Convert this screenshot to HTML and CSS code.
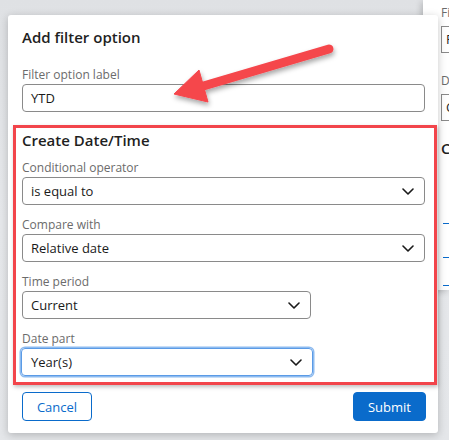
FILE: index.html
```html
<!DOCTYPE html>
<html lang="en">
<head>
<meta charset="utf-8">
<title>Add filter option</title>
<link rel="stylesheet" href="styles.css">
</head>
<body>
<div class="desk">
  <aside class="back-panel">
    <div class="bp-label">Fil</div>
    <div class="bp-input">F</div>
    <div class="bp-label bp-label2">Di</div>
    <div class="bp-input">C</div>
    <div class="bp-heading">C</div>
    <div class="bp-line bp-line1"></div>
    <div class="bp-line bp-line2"></div>
    <div class="bp-line bp-line3"></div>
  </aside>

  <section class="dialog">
    <h2 class="dialog-title">Add filter option</h2>

    <div class="field field-top">
      <label class="field-label">Filter option label</label>
      <div class="input">YTD</div>
    </div>

    <div class="annot">
      <h3 class="section-title">Create Date/Time</h3>

      <div class="field">
        <label class="field-label">Conditional operator</label>
        <div class="input select">
          <span>is equal to</span>
          <svg class="chev" viewBox="0 0 12 7" width="12" height="7"><polyline points="1,1 6,6 11,1"/></svg>
        </div>
      </div>

      <div class="field">
        <label class="field-label">Compare with</label>
        <div class="input select">
          <span>Relative date</span>
          <svg class="chev" viewBox="0 0 12 7" width="12" height="7"><polyline points="1,1 6,6 11,1"/></svg>
        </div>
      </div>

      <div class="field">
        <label class="field-label">Time period</label>
        <div class="input select narrow">
          <span>Current</span>
          <svg class="chev" viewBox="0 0 12 7" width="12" height="7"><polyline points="1,1 6,6 11,1"/></svg>
        </div>
      </div>

      <div class="field">
        <label class="field-label">Date part</label>
        <div class="input select narrow focused">
          <span>Year(s)</span>
          <svg class="chev" viewBox="0 0 12 7" width="12" height="7"><polyline points="1,1 6,6 11,1"/></svg>
        </div>
      </div>
    </div>

    <div class="footer">
      <button class="btn btn-secondary">Cancel</button>
      <button class="btn btn-primary">Submit</button>
    </div>
  </section>

  <svg class="arrow" width="449" height="140" viewBox="0 0 449 140">
    <defs>
      <filter id="sh" x="-20%" y="-50%" width="140%" height="200%">
        <feDropShadow dx="1" dy="3" stdDeviation="2.5" flood-color="#000" flood-opacity="0.35"/>
      </filter>
    </defs>
    <g filter="url(#sh)" fill="#f5464c" stroke="#f5464c">
      <line x1="329" y1="49" x2="200" y2="87" stroke-width="9" stroke-linecap="round"/>
      <polygon points="174,94 199,70 208,102" stroke-width="1" stroke-linejoin="round"/>
    </g>
  </svg>
</div>
</body>
</html>
```

FILE: styles.css
```css
* { box-sizing: border-box; }

html, body {
  margin: 0;
  padding: 0;
}

body {
  width: 449px;
  height: 440px;
  overflow: hidden;
  font-family: "Open Sans", "Noto Sans", "DejaVu Sans", sans-serif;
  color: #1f1f1f;
  background: linear-gradient(180deg, #dfe1e4 0%, #e6e8eb 50%, #e4e6e9 100%);
}

.desk {
  position: relative;
  width: 449px;
  height: 440px;
  overflow: hidden;
  padding-top: 15px;
  padding-left: 8px;
}

/* window lying behind the dialog, cut off by the frame */
.back-panel {
  position: absolute;
  left: 423px;
  top: 0;
  width: 26px;
  height: 290px;
  overflow: hidden;
  background: #fff;
  box-shadow: -2px 2px 6px rgba(0, 0, 0, 0.18);
  padding: 4px 0 0 18px;
  font-size: 12px;
}

.bp-label {
  color: #6b6b6b;
  line-height: 18px;
  white-space: nowrap;
}

.bp-label2 { margin-top: 19px; }

.bp-input {
  height: 27px;
  margin-top: 4px;
  border-top: 1px solid #8a8a8a;
  border-bottom: 1px solid #8a8a8a;
  border-left: 1px solid #8a8a8a;
  padding-left: 4px;
  line-height: 25px;
  font-size: 13px;
  color: #1f1f1f;
  white-space: nowrap;
}

.bp-heading {
  margin-top: 16px;
  font-size: 15px;
  font-weight: 600;
  line-height: 22px;
}

.bp-line {
  height: 1px;
  background: #0a6bcb;
  margin-left: 2px;
}
.bp-line1 { margin-top: 64px; }
.bp-line2 { margin-top: 33px; }
.bp-line3 { margin-top: 27px; }

.dialog {
  position: relative;
  width: 430px;
  height: 418px;
  background: #fff;
  border-radius: 3px;
  box-shadow: 0 2px 8px rgba(0, 0, 0, 0.22);
  padding: 10px 13px 11px 14px;
  display: flex;
  flex-direction: column;
}

.dialog-title {
  margin: 0;
  font-size: 15px;
  line-height: 24px;
  font-weight: 600;
  color: #1f1f1f;
}

.field-top { margin-top: 17px; }

.field + .field { margin-top: 11px; }

.field-label {
  display: block;
  font-size: 12px;
  line-height: 18px;
  color: #6b6b6b;
}

.input {
  height: 28px;
  border: 1px solid #8a8a8a;
  border-radius: 4px;
  padding: 0 10px 0 8px;
  font-size: 13px;
  line-height: 26px;
  color: #1a1a1a;
  display: flex;
  align-items: center;
  justify-content: space-between;
}

.input.narrow { width: 289px; }

.input.narrow.focused {
  width: 292px;
  margin-left: -1px;
  padding-left: 9px;
  border-color: #5b9be6;
  box-shadow: 0 0 0 1.5px #8dbbf0;
}

.chev {
  fill: none;
  stroke: #1a1a1a;
  stroke-width: 1.6;
  stroke-linecap: round;
  stroke-linejoin: round;
}

.annot {
  margin: 13px -12px 0 -9px;
  border: 3px solid #f2454b;
  padding: 1px 9px 6px 6px;
  box-shadow: 1px 2px 4px rgba(0, 0, 0, 0.25);
}

.section-title {
  margin: 0 0 8px;
  font-size: 15px;
  line-height: 22px;
  font-weight: 600;
  color: #1f1f1f;
}

.footer {
  margin-top: 7px;
  display: flex;
  justify-content: space-between;
}

.btn {
  height: 29px;
  border-radius: 4px;
  font-family: inherit;
  font-size: 13px;
  padding: 0;
  cursor: pointer;
}

.btn-secondary {
  width: 70px;
  background: #fff;
  border: 1px solid #0a6bcb;
  color: #0a6bcb;
}

.btn-primary {
  width: 73px;
  margin-right: -1px;
  background: #0a6bcb;
  border: 1px solid #0a6bcb;
  color: #fff;
}

.arrow {
  position: absolute;
  left: 0;
  top: 0;
  pointer-events: none;
}
```
